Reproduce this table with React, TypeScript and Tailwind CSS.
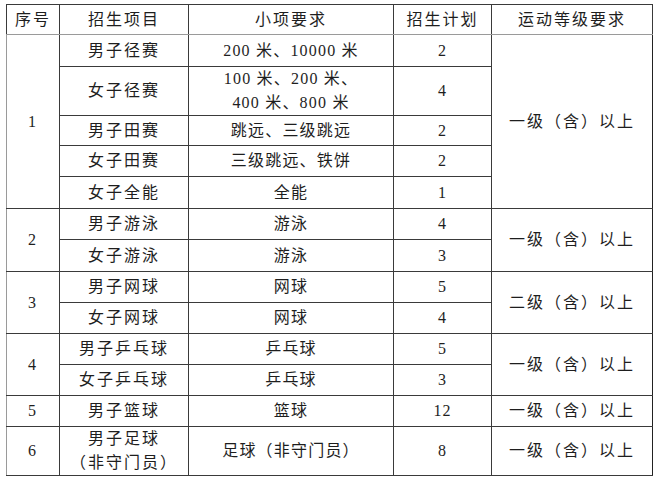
const dark = "border border-[#3a3a3a]";

type Row = {
  no?: { text: string; span: number };
  item: string[];
  detail: string[];
  plan: string;
  level?: { text: string; span: number };
  h: string;
  topGray?: boolean;
};

const rows: Row[] = [
  { no: { text: "1", span: 5 }, item: ["男子径赛"], detail: ["200 米、10000 米"], plan: "2", level: { text: "一级（含）以上", span: 5 }, h: "h-[32px]", topGray: true },
  { item: ["女子径赛"], detail: ["100 米、200 米、", "400 米、800 米"], plan: "4", h: "h-[49px]" },
  { item: ["男子田赛"], detail: ["跳远、三级跳远"], plan: "2", h: "h-[30px]" },
  { item: ["女子田赛"], detail: ["三级跳远、铁饼"], plan: "2", h: "h-[31px]" },
  { item: ["女子全能"], detail: ["全能"], plan: "1", h: "h-[32px]" },
  { no: { text: "2", span: 2 }, item: ["男子游泳"], detail: ["游泳"], plan: "4", level: { text: "一级（含）以上", span: 2 }, h: "h-[31px]", topGray: true },
  { item: ["女子游泳"], detail: ["游泳"], plan: "3", h: "h-[32px]" },
  { no: { text: "3", span: 2 }, item: ["男子网球"], detail: ["网球"], plan: "5", level: { text: "二级（含）以上", span: 2 }, h: "h-[31px]" },
  { item: ["女子网球"], detail: ["网球"], plan: "4", h: "h-[31px]" },
  { no: { text: "4", span: 2 }, item: ["男子乒乓球"], detail: ["乒乓球"], plan: "5", level: { text: "一级（含）以上", span: 2 }, h: "h-[31px]" },
  { item: ["女子乒乓球"], detail: ["乒乓球"], plan: "3", h: "h-[31px]" },
  { no: { text: "5", span: 1 }, item: ["男子篮球"], detail: ["篮球"], plan: "12", level: { text: "一级（含）以上", span: 1 }, h: "h-[31px]" },
  { no: { text: "6", span: 1 }, item: ["男子足球", "（非守门员）"], detail: ["足球（非守门员）"], plan: "8", level: { text: "一级（含）以上", span: 1 }, h: "h-[49px]" },
];

const Lines = ({ lines }: { lines: string[] }) => (
  <>
    {lines.map((l, i) => (
      <div key={i} className="leading-[24px]">
        {l}
      </div>
    ))}
  </>
);

export default function App() {
  return (
    <div className="w-[657px] h-[480px] bg-white pl-[6px] pt-[4px]">
      <table
        className="table-fixed border-collapse w-[646px] text-[16px] text-[#1e1e1e] tracking-[2px] text-center border border-[#9a9a9a]"
        style={{ fontFamily: '"Liberation Serif", "Noto Sans CJK SC", serif' }}
      >
        <colgroup>
          <col className="w-[53px]" />
          <col className="w-[129px]" />
          <col className="w-[205px]" />
          <col className="w-[98px]" />
          <col className="w-[161px]" />
        </colgroup>
        <thead>
          <tr className="h-[30px]">
            {["序号", "招生项目", "小项要求", "招生计划", "运动等级要求"].map((t) => (
              <th key={t} className={`${dark} border-b-[#9a9a9a] font-normal p-0`}>
                {t}
              </th>
            ))}
          </tr>
        </thead>
        <tbody>
          {rows.map((r, i) => (
            <tr key={i} className={`${r.h} ${r.topGray ? "border-t border-t-[#9a9a9a]" : ""}`}>
              {r.no && (
                <td rowSpan={r.no.span} className={`${dark} border-l-[#9a9a9a] p-0`}>
                  {r.no.text}
                </td>
              )}
              <td className={`${dark} p-0`}>
                <Lines lines={r.item} />
              </td>
              <td className={`${dark} p-0 tracking-[1.2px]`}>
                <Lines lines={r.detail} />
              </td>
              <td className={`${dark} p-0 tracking-[1px]`}>{r.plan}</td>
              {r.level && (
                <td rowSpan={r.level.span} className={`${dark} border-r-[#222] p-0`}>
                  {r.level.text}
                </td>
              )}
            </tr>
          ))}
        </tbody>
      </table>
    </div>
  );
}
